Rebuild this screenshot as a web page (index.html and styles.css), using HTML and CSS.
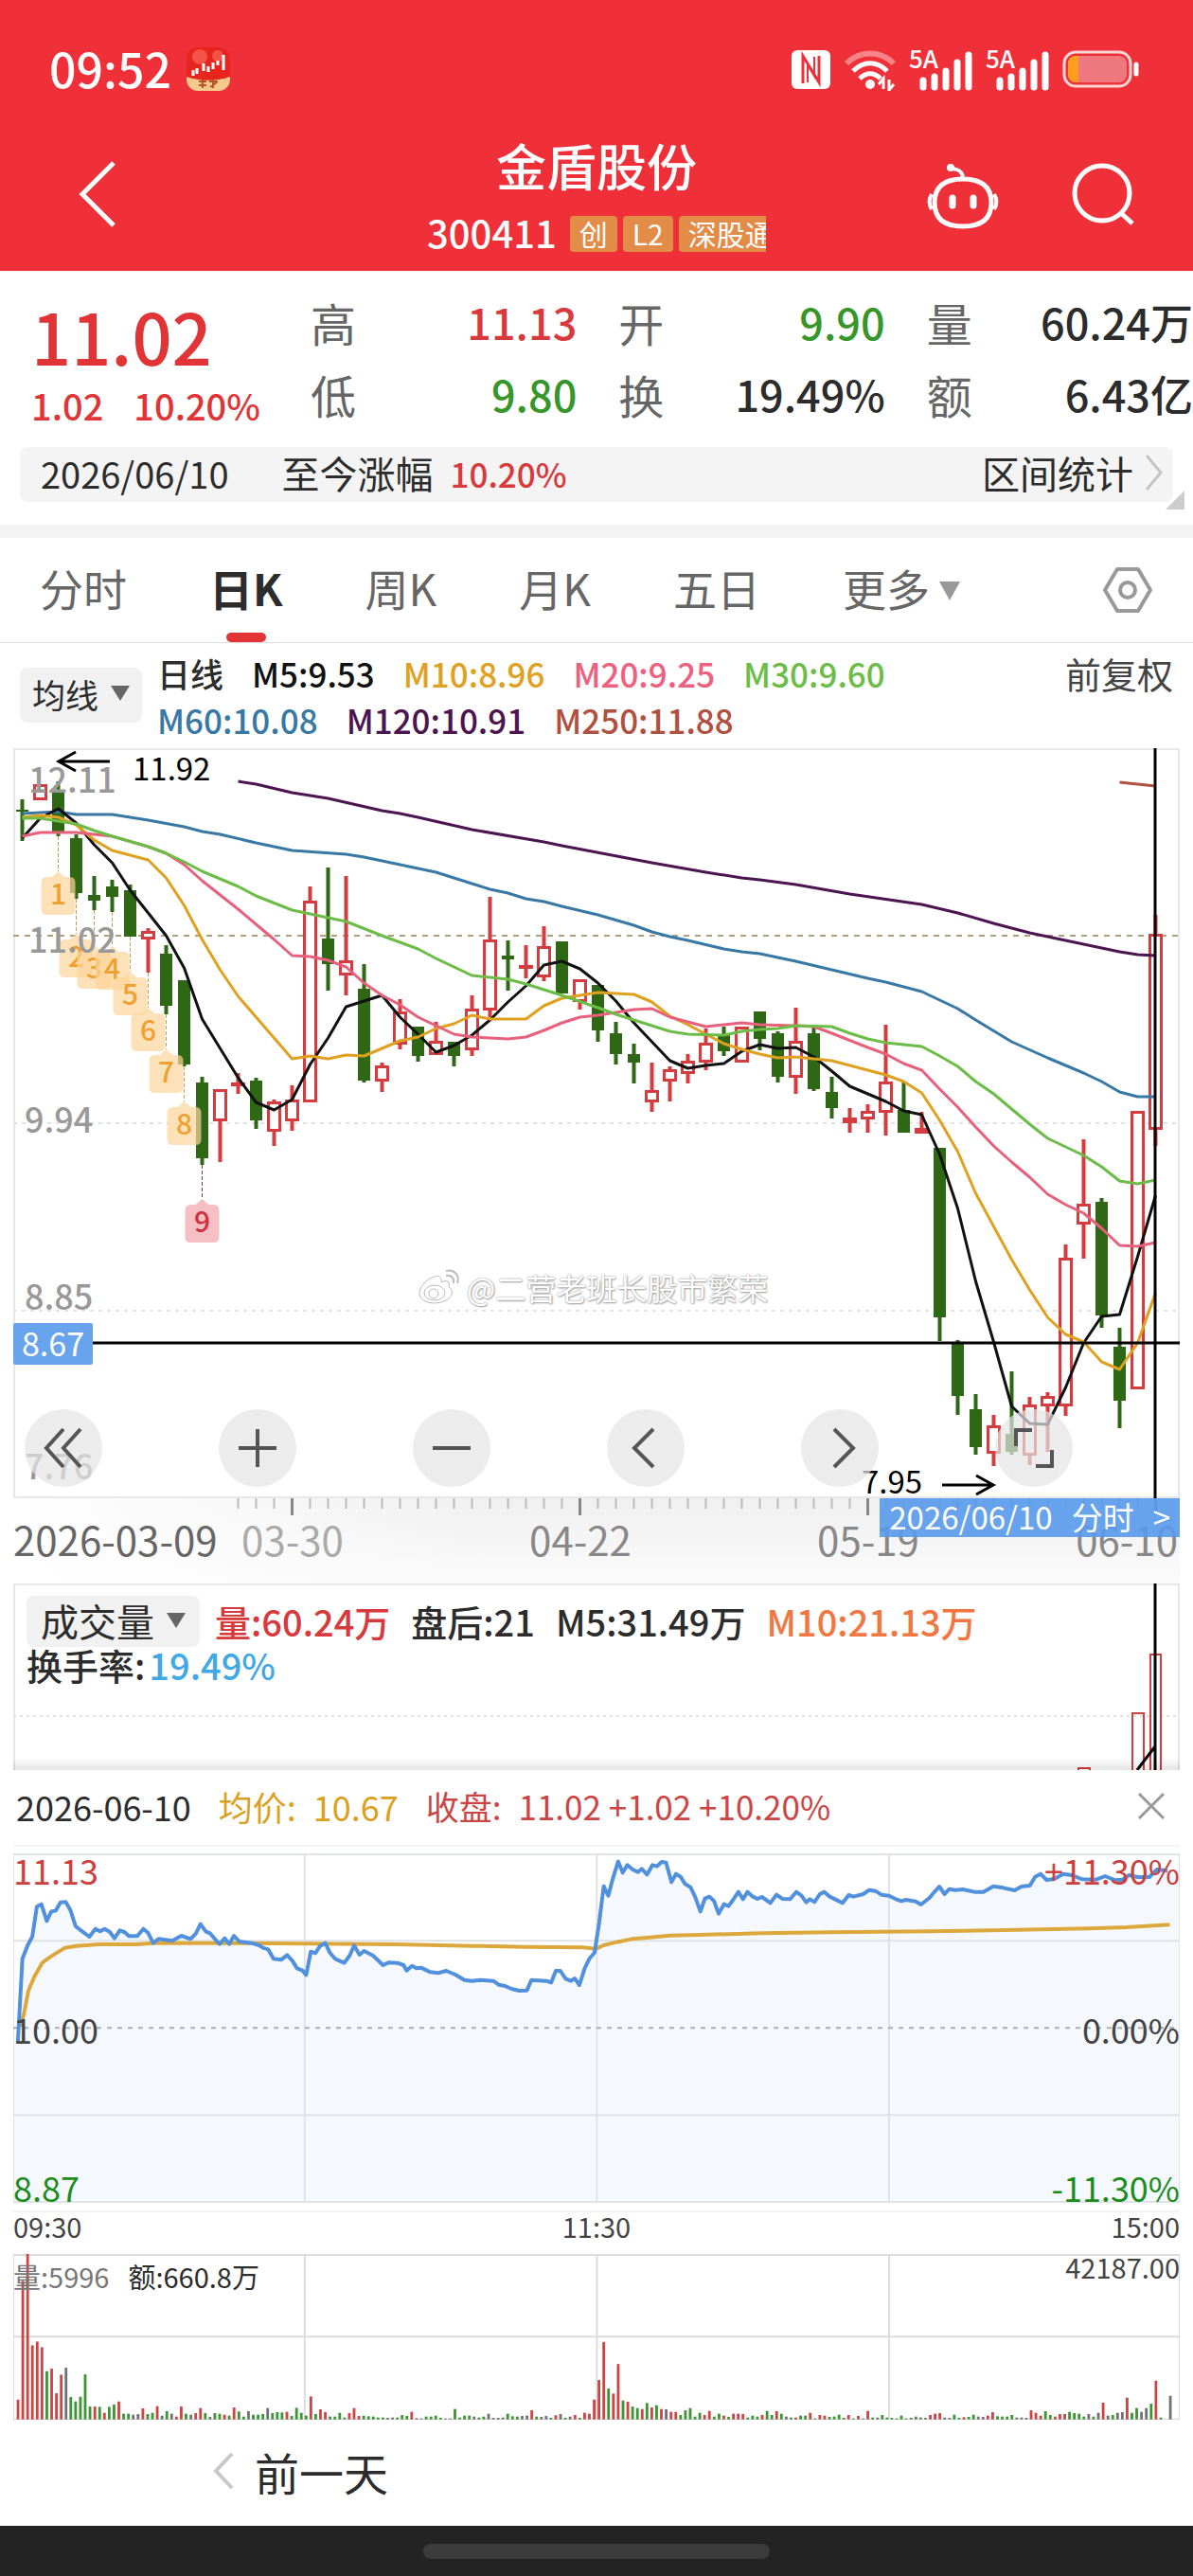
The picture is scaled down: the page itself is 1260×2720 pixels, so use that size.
FILE: index.html
```html
<!DOCTYPE html>
<html lang="zh-CN">
<head>
  <meta charset="utf-8">
  <title>金盾股份 300411</title>
  <meta name="viewport" content="width=device-width, initial-scale=1">
  <link rel="icon" href="data:,">
  <link rel="stylesheet" href="styles.css">
</head>
<body>
  <header class="top">
    <div class="status">
      <span class="time">09:52</span>
      <svg class="app-icon" width="46" height="46" viewBox="0 0 46 46">
        <rect width="46" height="46" rx="12" fill="#e8241f"/>
        <circle cx="14" cy="10" r="8" fill="#f4534a"/>
        <circle cx="33" cy="9" r="6" fill="#f4534a"/>
        <path d="M0 31c14 5 32 5 46 0v3a12 12 0 0 1-12 12H12A12 12 0 0 1 0 34z" fill="#f6c98a"/>
        <path d="M7 24v6M11 22v6M18 17v8M23 20v6M28 16v7M33 14v5M39 8v16" stroke="#fff" stroke-width="3"/>
        <path d="M13 36h8M17 34v9M13 40h8M24 36h9M28 34v9M25 42l7-5" stroke="#b5532a" stroke-width="2"/>
      </svg>
      <span class="grow"></span>
      <svg width="372" height="46" viewBox="0 0 372 46" fill="none">
        <rect x="0" y="3" width="41" height="41" rx="6" fill="#fff"/>
        <path d="M12 38V9l17 28V9" stroke="#ef3038" stroke-width="3"/>
        <path d="M17 37V18l7 12V10" stroke="#ef3038" stroke-width="2"/>
        <path d="M58 17c14-14 36-14 50 0" stroke="#f58488" stroke-width="6"/>
        <path d="M65 25c11-11 25-11 36 0M72 33c7-7 15-7 22 0" stroke="#fff" stroke-width="5"/>
        <circle cx="83" cy="39" r="5" fill="#fff"/>
        <path d="M97 44V33l-5 6M103 34v11l5-6" stroke="#fff" stroke-width="3"/>
        <text class="net" x="124" y="22">5A</text>
        <path d="M139 42V35M151 42V31M163 42V25M175 42V16M187 42V8" stroke="#fff" stroke-width="7" stroke-linecap="round"/>
        <text class="net" x="205" y="22">5A</text>
        <path d="M220 42V35M232 42V31M244 42V25M256 42V16M268 42V8" stroke="#fff" stroke-width="7" stroke-linecap="round"/>
        <rect x="288" y="5" width="70" height="36" rx="12" stroke="#fbd5d6" stroke-width="3"/>
        <rect x="292" y="9" width="62" height="28" rx="8" fill="#ee787d"/>
        <path d="M303 9h-3a8 8 0 0 0-8 8v12a8 8 0 0 0 8 8h3z" fill="#ff9d1c"/>
        <path d="M364 18v10" stroke="#fff" stroke-width="5" stroke-linecap="round"/>
      </svg>
    </div>
    <nav class="nav">
      <button class="icon-btn back" aria-label="返回">
        <svg width="42" height="74" viewBox="0 0 42 74"><path d="M38 4L5 37l33 33" fill="none" stroke="#fff" stroke-width="5"/></svg>
      </button>
      <div class="title">
        <h1>金盾股份</h1>
        <div class="sub"><span class="code">300411</span><span class="tag">创</span><span class="tag">L2</span><span class="tag">深股通</span></div>
      </div>
      <div class="tools">
        <button class="icon-btn" aria-label="助手">
          <svg width="76" height="72" viewBox="0 0 76 72" fill="none" stroke="#fff" stroke-width="5">
            <path d="M38 18c-17 0-30 6-30 25 0 17 10 25 30 25s30-8 30-25c0-19-13-25-30-25z"/>
            <path d="M38 18c0-7-3-10-11-11" stroke-width="4"/>
            <circle cx="25" cy="6" r="3" fill="#fff" stroke-width="2"/>
            <path d="M5 34c-3 5-3 11 0 16M71 34c3 5 3 11 0 16" stroke-width="4"/>
            <path d="M27 38v8M49 38v8" stroke-width="7" stroke-linecap="round"/>
          </svg>
        </button>
        <button class="icon-btn" aria-label="搜索">
          <svg width="68" height="68" viewBox="0 0 68 68" fill="none" stroke="#fff" stroke-width="5"><circle cx="33" cy="33" r="29"/><path d="M53 54l12 11"/></svg>
        </button>
      </div>
    </nav>
  </header>

  <section class="quote">
    <div class="price">
      <div class="last">11.02</div>
      <div class="change"><span>1.02</span><span>10.20%</span></div>
    </div>
    <dl class="stats">
      <div><dt>高</dt><dd class="up">11.13</dd></div>
      <div><dt>开</dt><dd class="down">9.90</dd></div>
      <div><dt>量</dt><dd>60.24万</dd></div>
      <div><dt>低</dt><dd class="down">9.80</dd></div>
      <div><dt>换</dt><dd>19.49%</dd></div>
      <div><dt>额</dt><dd>6.43亿</dd></div>
    </dl>
  </section>
  <div class="range">
    <span>2026/06/10</span>
    <span class="since">至今涨幅</span>
    <span class="up pct">10.20%</span>
    <a class="range-link" href="#">区间统计<svg width="22" height="40" viewBox="0 0 22 40"><path d="M4 2l15 18L4 38" fill="none" stroke="#c4c4c4" stroke-width="3"/></svg></a>
    <i class="corner"></i>
  </div>

  <nav class="tabs">
    <button>分时</button>
    <button class="on">日K</button>
    <button>周K</button>
    <button>月K</button>
    <button>五日</button>
    <button>更多<i class="tri"></i></button>
    <button class="setting" aria-label="设置">
      <svg width="52" height="50" viewBox="0 0 52 50" fill="none" stroke="#999" stroke-width="4"><path d="M15 3h22l13 22-13 22H15L2 25z" stroke-linejoin="round"/><circle cx="26" cy="25" r="8"/></svg>
    </button>
  </nav>

  <div class="legend">
    <button class="chip">均线<i class="tri"></i></button>
    <div class="ma">
      <div><span>日线</span><span class="m5">M5:9.53</span><span class="m10">M10:8.96</span><span class="m20">M20:9.25</span><span class="m30">M30:9.60</span></div>
      <div><span class="m60">M60:10.08</span><span class="m120">M120:10.91</span><span class="m250">M250:11.88</span></div>
    </div>
    <span class="adjust">前复权</span>
  </div>

  <main class="charts">
    <div class="kline">
      <svg id="kline" viewBox="0 0 1232 792">
        <rect x="1" y="1" width="1230" height="790" fill="#fff" stroke="#e8e8e8" stroke-width="2"/>
        <path d="M0 396H1232M0 594H1232" stroke="#e2e2e2" stroke-width="2" stroke-dasharray="4 5"/>
        <path d="M0 198H1232" stroke="#b0a080" stroke-width="2" stroke-dasharray="6 6"/>
        <g id="candles"></g>
        <g id="averages" fill="none" stroke-width="3" stroke-linejoin="round"></g>
        <g id="signals"></g>
        <g class="scale">
          <text x="16" y="47">12.11</text>
          <text x="16" y="216">11.02</text>
          <text x="12" y="406">9.94</text>
          <text x="12" y="593">8.85</text>
          <text x="12" y="772">7.76</text>
        </g>
        <path d="M102 14H48M66 4L48 14l18 10M981 778h54M1017 768l18 10-18 10" fill="none" stroke="#000" stroke-width="3"/>
        <text class="mark" x="126" y="34">11.92</text>
        <text class="mark" x="896" y="787">7.95</text>
        <path d="M0 628H1232M1206 0V792" stroke="#000" stroke-width="3"/>
      </svg>
      <span class="cursor-price">8.67</span>
      <div class="watermark">
        <svg width="46" height="40" viewBox="0 0 46 40" fill="#fff" stroke="#bbb" stroke-width="1">
          <path d="M18 9C8 12 1 21 2 28c2 9 16 11 26 7 9-4 11-11 5-15 2-6-2-8-8-5 1-5-2-8-7-6z"/>
          <ellipse cx="18" cy="26" rx="11" ry="8"/><circle cx="17" cy="27" r="5"/>
          <path d="M30 3c9-2 15 5 12 13M30 8c6-1 9 3 8 8" fill="none" stroke-width="2"/>
        </svg>
        <span>@二营老班长股市繁荣</span>
      </div>
      <div class="controls">
        <button aria-label="最早"><svg width="44" height="44" viewBox="0 0 44 44"><path d="M22 2L4 22l18 20M40 2L22 22l18 20"/></svg></button>
        <button aria-label="放大"><svg width="44" height="44" viewBox="0 0 44 44"><path d="M22 2v40M2 22h40"/></svg></button>
        <button aria-label="缩小"><svg width="44" height="44" viewBox="0 0 44 44"><path d="M2 22h40"/></svg></button>
        <button aria-label="左移"><svg width="44" height="44" viewBox="0 0 44 44"><path d="M30 2L10 22l20 20"/></svg></button>
        <button aria-label="右移"><svg width="44" height="44" viewBox="0 0 44 44"><path d="M16 2l20 20-20 20"/></svg></button>
        <button aria-label="全屏"><svg width="44" height="44" viewBox="0 0 44 44"><path d="M3 20V3h17M41 24v17H24"/></svg></button>
      </div>
      <a class="day-link" href="#"><span>2026/06/10</span><span>分时</span><span>&gt;</span></a>
    </div>

    <div class="dates">
      <svg viewBox="0 0 1232 90">
        <g id="ticks"></g>
        <g class="date">
          <text class="first" x="0" y="61">2026-03-09</text>
          <text class="faded" x="295" y="61" text-anchor="middle">03-30</text>
          <text x="599" y="61" text-anchor="middle">04-22</text>
          <text x="903" y="61" text-anchor="middle">05-19</text>
          <text x="1230" y="61" text-anchor="end">06-10</text>
        </g>
      </svg>
    </div>

    <div class="volume">
      <svg class="volume-bars" viewBox="0 0 1232 197">
        <path d="M1 197V1H1231V197" fill="none" stroke="#e8e8e8" stroke-width="2"/>
        <path d="M0 140H1232" stroke="#e2e2e2" stroke-width="2" stroke-dasharray="3 4"/>
        <path d="M1125 200v-5h12v5M1182 200v-63h12v63M1201 200V75h11v125" fill="none" stroke="#cf3f42" stroke-width="2"/>
        <path d="M1187 197l19-25M1206 0v197" stroke="#000" stroke-width="3"/>
      </svg>
      <div class="volume-info">
        <div>
          <button class="chip">成交量<i class="tri"></i></button>
          <span class="up">量:60.24万</span><span>盘后:21</span><span>M5:31.49万</span><span class="v10">M10:21.13万</span>
        </div>
        <div class="turnover">换手率:<span class="rate">19.49%</span></div>
      </div>
    </div>
  </main>

  <section class="day">
    <div class="day-head">
      <span>2026-06-10</span>
      <span class="avg"><span>均价:</span><span>10.67</span></span>
      <span class="close-price"><span>收盘:</span><span>11.02 +1.02 +10.20%</span></span>
      <button class="icon-btn close" aria-label="关闭"><svg width="30" height="30" viewBox="0 0 30 30"><path d="M2 2l26 26M28 2L2 28" stroke="#999" stroke-width="3"/></svg></button>
    </div>
    <div class="minute">
      <svg viewBox="17 144 1533 1164" preserveAspectRatio="none">
        <path d="M17 146H1550M17 1305H1550" stroke="#f3f3f3"/>
        <path id="minuteFill" fill="#f5f9fe"/>
        <path d="M17 174H1550V1275H17zM17 448H1550M17 1000H1550M400 174V1275M784 174V1275M1168 174V1275" fill="none" stroke="#e0e3e6"/>
        <path d="M17 724H1550" stroke="#aaafb5" stroke-dasharray="5 6"/>
        <path d="M26 720L31 680 37 605 45 560 55 518 65 500 75 485 85 470 100 464 130 459 180 459 200 455 300 455 400 457 520 459 620 464 690 467 765 469 783 473 793 462 810 452 830 442 850 438 880 431 920 429 1000 424 1090 421 1220 418 1320 414 1430 409 1480 405 1537 397" class="avg-line"/>
        <path id="minuteLine" class="price-line"/>
      </svg>
      <div class="labels">
        <div class="up"><span>11.13</span><span>+11.30%</span></div>
        <div><span>10.00</span><span>0.00%</span></div>
        <div class="low"><span>8.87</span><span>-11.30%</span></div>
      </div>
    </div>
    <div class="hours"><span>09:30</span><span>11:30</span><span>15:00</span></div>
    <div class="minute-volume">
      <svg viewBox="17 210 1533 526" preserveAspectRatio="none">
        <path d="M17 213H1550V735H17zM17 472H1550M400 213V735M784 213V735M1168 213V735" fill="none" stroke="#dcdcdc"/>
        <g id="minuteBars"></g>
      </svg>
      <div class="vol-text"><span class="muted">量:5996</span><span>额:660.8万</span><span class="max">42187.00</span></div>
    </div>
    <button class="prev"><svg width="24" height="40" viewBox="0 0 24 40"><path d="M21 2L4 20l17 18" fill="none" stroke="#c8c8c8" stroke-width="4"/></svg>前一天</button>
  </section>
  <footer class="home"><i></i></footer>
  <script src="chart.js"></script>
</body>
</html>
```
FILE: styles.css
```css
* {
  box-sizing: border-box;
}

body {
  margin: 0;
  background: #fff;
  color: #2c2c2c;
  font-family: "Noto Sans CJK SC", "Noto Sans", sans-serif;
  overflow-x: hidden;
}

button {
  border: 0;
  padding: 0;
  background: none;
  color: inherit;
  font: inherit;
  cursor: pointer;
}

a {
  color: inherit;
  text-decoration: none;
}

svg {
  display: block;
}

.up {
  color: #d8393c;
}

.down {
  color: #36962a;
}

.tri {
  display: inline-block;
  border: 10px solid transparent;
  border-top: 16px solid #666;
  border-bottom: 0;
}

/* header */

.top {
  background: #f03038;
  color: #fff;
  height: 286px;
}

.status {
  display: flex;
  align-items: center;
  gap: 16px;
  height: 144px;
  padding: 2px 52px 0;
}

.time {
  padding-bottom: 4px;
  font-size: 50px;
  line-height: 56px;
  font-weight: 500;
}

.grow {
  flex: 1;
}

.net {
  font-size: 26px;
  font-weight: 500;
  fill: #fff;
}

.nav {
  display: grid;
  grid-template-columns: 1fr 358px 1fr;
}

.icon-btn {
  flex: none;
}

.back {
  justify-self: start;
  align-self: start;
  margin: 24px 82px;
}

.title {
  overflow: hidden;
  text-align: center;
}

.title h1 {
  margin: 0 0 24px;
  font-size: 53px;
  line-height: 60px;
  font-weight: 500;
}

.sub {
  display: flex;
  gap: 6px;
  align-items: center;
  height: 38px;
  white-space: nowrap;
}

.code {
  font-size: 40px;
  line-height: 38px;
  padding-bottom: 4px;
  font-weight: 500;
  margin-right: 8px;
}

.tag {
  flex: none;
  padding: 0 10px 2px;
  border-radius: 4px;
  background: #e28c48;
  font-size: 30px;
  line-height: 36px;
}

.tools {
  display: flex;
  justify-content: flex-end;
  align-items: flex-start;
  gap: 76px;
  padding: 27px 61px 0 0;
}

/* quote */

.quote {
  display: flex;
  padding-top: 16px;
  height: 186px;
}

.price {
  width: 328px;
  flex: none;
  padding: 14px 0 0 33px;
  color: #e03437;
}

.last {
  font-size: 74px;
  line-height: 76px;
  font-weight: 500;
}

.change {
  display: flex;
  gap: 32px;
  margin-top: 14px;
  font-size: 38px;
  line-height: 44px;
  font-weight: 500;
}

.stats {
  flex: 1;
  display: grid;
  grid-template-columns: repeat(3, 1fr);
  align-content: start;
  column-gap: 44px;
  margin: 0;
  line-height: 76px;
  white-space: nowrap;
}

.stats div {
  display: flex;
  justify-content: space-between;
}

.stats dt {
  color: #666;
  font-size: 48px;
}

.stats dd {
  margin: 0;
  font-size: 45px;
  font-weight: 500;
}

.range {
  position: relative;
  display: flex;
  align-items: center;
  height: 58px;
  margin: 0 21px 24px;
  padding: 0 10px 4px 22px;
  border-radius: 8px;
  background: #f4f4f4;
  font-size: 38px;
}

.since {
  margin-left: 56px;
  font-size: 40px;
}

.pct {
  margin-left: 18px;
  font-size: 35px;
  font-weight: 500;
}

.range-link {
  display: flex;
  align-items: center;
  gap: 10px;
  margin-left: auto;
  font-size: 40px;
}

.corner {
  position: absolute;
  right: -12px;
  bottom: -8px;
  border-left: 20px solid transparent;
  border-bottom: 20px solid #ccc;
}

/* tabs */

.tabs {
  display: flex;
  align-items: center;
  gap: 87px;
  height: 125px;
  padding: 0 43px 0 42px;
  border-top: 14px solid #f3f3f3;
  border-bottom: 1px solid #ddd;
  color: #666;
  font-size: 46px;
  white-space: nowrap;
}

.tabs button {
  position: relative;
  height: 110px;
  padding-bottom: 6px;
}

.tabs .tri {
  margin-left: 10px;
  border-width: 20px 11px 0;
  border-top-color: #999;
  vertical-align: 6px;
}

.tabs .on {
  color: #2c2c2c;
  font-weight: 700;
}

.tabs .on::after {
  content: "";
  position: absolute;
  left: 50%;
  bottom: 0;
  width: 42px;
  height: 10px;
  margin-left: -21px;
  border-radius: 5px;
  background: #e03437;
}

.tabs .setting {
  margin-left: auto;
  padding-bottom: 0;
}

.legend {
  display: flex;
  align-items: flex-start;
  height: 111px;
  padding: 7px 21px 0;
  font-size: 35px;
  white-space: nowrap;
}

.chip {
  display: inline-flex;
  align-items: center;
  gap: 13px;
  border-radius: 8px;
  background: #f1f1f1;
}

.legend .chip {
  height: 58px;
  margin: 19px 16px 0 0;
  padding: 0 13px 4px;
}

.ma {
  line-height: 49px;
  font-weight: 500;
}

.ma div {
  display: flex;
  gap: 30px;
}

.adjust {
  margin-left: auto;
  font-size: 38px;
  line-height: 49px;
  color: #444;
}

.m5 { color: #111; }
.m10 { color: #e0a020; }
.m20 { color: #ee6080; }
.m30 { color: #6cbc48; }
.m60 { color: #3878a4; }
.m120 { color: #4c1450; }
.m250 { color: #b05040; }

/* daily chart */

.charts {
  padding: 0 14px;
}

.charts svg {
  width: 100%;
}

.kline {
  position: relative;
}

.scale text {
  font-size: 36px;
  font-weight: 500;
  fill: #999;
}

.mark {
  font-size: 33px;
  fill: #000;
}

.signal {
  font-size: 30px;
  font-weight: 500;
  text-anchor: middle;
}

.cursor-price {
  position: absolute;
  left: 0;
  top: 607px;
  padding: 0 9px 3px;
  border-radius: 2px;
  background: #68a4ee;
  color: #fff;
  font-size: 34px;
  line-height: 41px;
}

.watermark {
  position: absolute;
  left: 427px;
  top: 547px;
  display: flex;
  align-items: center;
  gap: 6px;
  color: #fff;
  font-size: 32px;
  line-height: 44px;
  text-shadow: 0 0 2px #888, 1px 1px 2px #aaa;
}

.watermark svg {
  width: 46px;
}

.controls {
  position: absolute;
  left: 12px;
  bottom: 12px;
  display: flex;
  gap: 123px;
}

.controls button {
  width: 82px;
  height: 82px;
  border-radius: 50%;
  background: rgba(228, 228, 228, 0.7);
}

.controls svg {
  width: 44px;
  margin: auto;
  fill: none;
  stroke: #555;
  stroke-width: 4;
}

.day-link {
  position: absolute;
  z-index: 1;
  right: 0;
  top: 100%;
  display: flex;
  gap: 20px;
  padding: 0 10px 2px;
  background: rgba(88, 154, 236, 0.9);
  color: #fff;
  font-size: 33px;
  line-height: 39px;
}

.dates {
  background: linear-gradient(90deg, #fff, rgba(255, 255, 255, 0) 40%), linear-gradient(#f0f0f0, #fbfbfb);
}

.date text {
  font-size: 42px;
  fill: #888;
}

.date .first {
  fill: #666;
}

.date .faded {
  fill: #aaa;
}

.volume {
  position: relative;
  overflow: hidden;
}

.volume::after {
  content: "";
  position: absolute;
  left: 0;
  right: 0;
  bottom: 0;
  height: 14px;
  background: linear-gradient(rgba(0, 0, 0, 0), rgba(0, 0, 0, 0.1));
}

.volume-info {
  position: absolute;
  left: 14px;
  top: 14px;
  font-size: 38px;
  font-weight: 500;
  line-height: 44px;
  white-space: nowrap;
}

.volume-info div {
  display: flex;
  align-items: center;
  gap: 22px;
  height: 54px;
  padding-bottom: 3px;
}

.volume-info .chip {
  height: 54px;
  padding: 0 15px 2px;
  margin-right: -6px;
  font-size: 40px;
  font-weight: 400;
}

.volume-info .turnover {
  gap: 4px;
  height: 38px;
}

.rate {
  color: #40a8e4;
}

.v10 {
  color: #f07840;
}

/* one-day panel */

.day {
  position: relative;
  padding: 0 14px;
  background: #fff;
}

.day-head {
  display: flex;
  align-items: center;
  gap: 29px;
  height: 79px;
  padding: 0 15px 4px 3px;
  font-size: 36px;
  white-space: nowrap;
}

.avg {
  display: flex;
  gap: 18px;
  color: #dca020;
}

.close-price {
  display: flex;
  gap: 18px;
  color: #cc4444;
  font-size: 35px;
}

.close {
  margin-left: auto;
}

.minute,
.minute-volume {
  position: relative;
}

.minute svg {
  width: 100%;
  height: 388px;
}

.minute path {
  vector-effect: non-scaling-stroke;
  stroke-width: 2;
}

.minute .price-line,
.minute .avg-line {
  fill: none;
  stroke: #5090dc;
  stroke-width: 4;
  stroke-linejoin: round;
}

.minute .avg-line {
  stroke: #dca83c;
}

.labels {
  position: absolute;
  left: 0;
  right: 0;
  top: 4px;
  bottom: 5px;
  display: flex;
  flex-direction: column;
  justify-content: space-between;
  font-size: 36px;
  line-height: 44px;
  color: #444;
}

.labels div {
  display: flex;
  justify-content: space-between;
}

.labels .up {
  color: #cc4040;
}

.labels .low {
  color: #1c8c1c;
}

.hours {
  display: flex;
  justify-content: space-between;
  font-size: 29px;
  line-height: 28px;
  padding-bottom: 16px;
  color: #444;
}

.minute-volume svg {
  width: 100%;
  height: 175px;
}

.minute-volume path {
  vector-effect: non-scaling-stroke;
  stroke-width: 2;
}

.vol-text {
  position: absolute;
  left: 0;
  right: 0;
  top: 3px;
  display: flex;
  gap: 20px;
  font-size: 29px;
  line-height: 40px;
}

.muted {
  color: #777;
}

.max {
  margin-left: auto;
  line-height: 20px;
  color: #444;
}

.prev {
  display: flex;
  align-items: center;
  gap: 21px;
  height: 112px;
  padding-bottom: 4px;
  margin-left: 210px;
  font-size: 47px;
}

.home {
  display: flex;
  justify-content: center;
  align-items: center;
  height: 53px;
  background: #232323;
}

.home i {
  width: 29%;
  height: 16px;
  border-radius: 8px;
  background: #3c3c3c;
}
```
FILE: chart.js
```js
const UP = '#d43c3f';
const DOWN = '#2f6814';

// high, body top, body bottom, low for every trading day
const candles = `g 54 65 67 98|r 38 38 55 55|g 35 45 88 93|g 91 95 153 159|g 135 155 161 171|g 139 146 157 173
g 144 150 199 199|r 190 193 202 237|g 208 217 272 281|g 245 245 334 336|g 347 353 433 440|r 360 360 394 437
r 343 353 357 365|g 348 351 393 402|r 371 373 405 420|r 356 371 394 404|r 146 161 374 374|g 126 201 228 256
r 135 224 240 261|g 228 254 351 353|r 332 335 352 363|r 265 278 313 318|g 294 294 325 331|r 289 309 324 324
g 310 310 325 336|r 261 275 319 325|r 157 202 277 284|g 203 219 223 256|r 208 229 233 243|r 188 209 242 246
g 204 204 259 259|r 244 244 268 276|g 250 250 298 310|g 289 301 323 334|g 312 323 332 354|r 332 361 374 384
r 336 339 352 373|r 323 330 344 354|r 296 311 332 340|g 294 302 320 325|r 294 294 332 332|g 278 278 307 319
g 299 301 347 353|r 274 309 348 365|g 295 301 360 362|g 347 363 380 391|r 380 390 396 406|r 376 383 392 406
r 292 352 385 409|g 353 382 406 406|r 384 401 407 407|g 422 422 601 626|g 625 629 684 704|g 682 698 738 746
r 704 715 745 758|g 658 724 743 746|r 685 693 747 757|r 680 684 695 743|r 524 538 695 705|r 413 481 503 539
g 475 479 599 612|g 612 632 689 718|r 383 383 677 677|r 176 196 403 420`.split(/[|\n]/);

// "day:value" pairs, straight between them
const averages = {
  '#4c1450': '12:35 13:38 15:47 17:53 20:66 21:69 22:73 25:86 29:99 30:103 35:121 38:131 40:137 41:139 43:144 46:154 50:165 52:174 54:185 56:195 57:199 58:203 59:207 61:215 62:218 63:219',
  '#b05040': '61:36 63:40',
  '#3878a4': '0:69 2:67 3:70 5:70 7:76 9:83 10:88 11:91 13:100 15:108 18:112 19:115 20:119 21:123 23:131 25:143 26:149 27:153 28:159 29:162 30:167 32:176 34:187 35:194 36:199 37:203 39:212 40:215 41:217 43:225 45:234 47:243 48:247 50:257 52:275 53:287 55:310 57:327 59:343 60:352 61:363 62:368 63:368',
  '#111': '0:95 1:74 2:64 3:79 4:102 5:121 6:150 7:174 8:198 9:232 10:286 11:317 12:348 13:374 14:382 15:371 16:334 17:306 18:273 19:267 20:261 21:284 22:302 23:321 24:314 25:303 26:287 27:268 28:251 29:229 30:225 31:233 32:248 33:267 34:290 35:310 36:330 37:338 38:335 39:333 40:320 41:313 42:317 43:316 44:326 45:341 46:357 47:365 48:373 49:383 50:387 51:429 52:486 53:563 54:627 55:695 56:713 57:714 58:675 59:628 60:600 61:598 62:537 63:472',
  '#e0a020': '0:73 1:71 2:73 3:81 4:97 5:108 7:118 8:137 9:166 10:202 11:234 12:262 13:284 14:306 15:328 16:325 17:328 18:324 19:325 20:317 21:309 22:305 23:296 24:291 25:282 26:286 28:286 29:272 30:264 31:261 32:258 34:260 35:268 36:283 37:292 38:302 39:312 40:318 41:323 42:327 43:326 45:330 46:335 48:345 49:352 50:364 51:393 52:426 53:470 54:505 55:540 56:572 57:601 58:619 59:627 60:648 61:656 62:628 63:575',
  '#e8607c': '0:93 1:89 3:89 5:93 7:104 8:111 9:123 10:140 11:155 12:170 13:186 14:202 15:219 16:220 17:224 18:231 19:248 20:261 21:271 22:284 23:293 24:302 25:305 27:307 28:305 29:298 30:290 31:284 32:282 34:276 35:275 36:284 37:289 38:294 39:292 40:290 41:292 43:293 44:294 45:301 47:316 48:323 49:333 50:340 51:360 52:379 53:400 54:420 55:437 56:453 57:471 58:482 59:491 60:507 61:525 62:526 63:522',
  '#6cbc48': '0:74 1:74 2:77 3:80 4:87 5:93 7:104 8:111 9:120 10:130 12:146 13:156 15:171 17:179 18:183 20:198 22:212 23:222 25:240 26:242 27:244 28:249 30:261 32:274 33:281 34:287 36:299 37:302 39:303 40:299 41:297 42:296 43:293 45:294 46:301 47:307 48:311 50:315 51:325 52:336 53:352 54:365 56:397 57:412 59:430 60:442 61:457 62:460 63:456'
};

const dayX = i => 9.5 + 19 * i;
const put = (id, html) => { document.getElementById(id).innerHTML = html; };

put('candles', candles.map((row, i) => {
  const [kind, ...v] = row.split(' ');
  const [high, top, bottom, low] = v.map(Number);
  const x = dayX(i);
  const color = kind === 'r' ? UP : DOWN;
  const wick = `<path d="M${x} ${high}V${top}M${x} ${bottom}V${low}" stroke="${color}" stroke-width="4"/>`;
  if (kind === 'g') {
    return wick + `<rect x="${x - 6.5}" y="${top}" width="13" height="${bottom - top}" fill="${color}"/>`;
  }
  return wick + `<rect x="${x - 6}" y="${top + 1.5}" width="12" height="${bottom - top - 3}" fill="#fff" stroke="${color}" stroke-width="3"/>`;
}).join(''));

put('averages', Object.entries(averages).map(([color, line]) => {
  const points = line.split(' ').map(p => {
    const [i, y] = p.split(':');
    return dayX(i) + ',' + y;
  });
  return `<polyline points="${points.join(' ')}" stroke="${color}"/>`;
}).join(''));

// nine-turn counter below the falling days
const tips = [130, 196, 208, 209, 236, 274, 318, 373, 476];
put('signals', tips.map((y, n) => {
  const x = dayX(n + 2);
  const low = candles[n + 2].split(' ')[4];
  const last = n === 8;
  return `<path d="M${x} ${low}V${y}" stroke="${last ? '#a03040' : '#c8a050'}" stroke-dasharray="4 2"/>
    <path d="M${x} ${y}l7 6h5q6 0 6 6v28q0 6-6 6h-24q-6 0-6-6v-28q0-6 6-6h5z" fill="${last ? '#f5b4b8' : '#fcd49a'}" fill-opacity="${last ? 0.85 : 0.7}"/>
    <text class="signal" x="${x}" y="${y + 35}" fill="${last ? '#d03040' : '#f0a030'}">${n + 1}</text>`;
}).join(''));

let ticks = '';
for (let i = 12; i < 64; i++) {
  const big = i % 16 === 15;
  ticks += `<path d="M${dayX(i)} 0v${big ? 18 : 11}" stroke="${big ? '#888' : '#bbb'}" stroke-width="${big ? 3 : 2}"/>`;
}
put('ticks', ticks);

const minute = '23,770 29,505 36,462 42,435 48,340 54,332 61,385 67,355 73,352 79,326 86,325 92,350 99,402 106,415 117,435 125,410 131,418 137,410 144,420 150,440 157,415 163,420 169,433 180,433 188,410 194,422 201,455 208,442 226,448 238,432 250,442 257,425 263,395 270,418 276,425 283,445 288,458 295,440 301,458 307,432 314,450 330,455 340,462 345,470 352,475 359,505 369,508 377,493 384,512 390,535 397,542 402,556 408,482 414,487 420,465 427,455 433,485 440,505 452,518 459,495 465,463 472,492 478,480 490,495 503,525 510,517 522,518 530,525 534,542 541,527 547,535 553,533 565,547 575,550 586,543 598,555 610,572 620,575 630,572 648,575 655,587 662,590 672,600 682,606 692,605 698,572 718,575 724,580 730,543 736,543 743,568 750,575 755,567 761,588 768,535 774,505 781,485 787,390 793,275 799,305 805,250 812,197 818,232 824,208 831,222 838,230 843,220 850,238 857,208 863,212 869,198 875,200 882,262 888,236 894,245 900,268 907,278 913,308 920,355 926,314 932,308 938,322 944,362 951,332 957,338 963,318 970,293 976,316 982,293 989,308 995,315 1001,309 1012,328 1020,302 1028,315 1038,316 1046,293 1053,305 1059,326 1064,316 1070,325 1077,300 1083,293 1090,308 1107,328 1115,303 1121,308 1134,300 1142,287 1150,290 1158,302 1168,305 1178,317 1184,322 1190,318 1203,323 1210,333 1221,312 1228,292 1234,276 1241,300 1247,284 1255,287 1265,285 1280,293 1292,293 1305,275 1318,280 1333,288 1342,276 1353,273 1360,245 1367,236 1375,255 1385,252 1397,236 1408,240 1422,253 1440,254 1452,243 1465,256 1475,254 1483,240 1495,246 1510,246 1520,222 1534,226';
document.getElementById('minuteLine').setAttribute('d', 'M' + minute);
document.getElementById('minuteFill').setAttribute('d', 'M' + minute + ' 1550,226 1550,1275 17,1275 17,770z');

// volume per minute, keyed by the minute where each run starts
const runs = {
  0: 'r63 r440 r525 r235 r247 r229 g153 r161 r83 r142 k164 g71 g57 g72 g143 g41 r41 g40 r21 g40 g47 r57 g18 g18 k15 k17 r35 g17 g21 r42 k12 g26 k18 r9 r41 g18 k15 r20 r36 g20 k8 g20 g18 r15 g12 r38 g25 g9 k26 g15 g15 g17 k36 g20 g23 g22 r24 g11 g37 g21 g12 r73 g17 r32 r23 g9 g9 g21 g6 r20 r36 r11 g12 g10 g9 g6 g6',
  77: 'k5 k6 g6 g14 g11 r24 k4 k3 g9 g9 g12 g5 k3 k3 g33 g6 g12 g12 k9 g6 g9 k18 k5 k5 k6 g18 g10 g9 k11 k12 r29 g9 k8 k11 g5 r13 k17 g5 k9 r14 g5 r21 r18',
  120: 'r63 r125 r246 g98 r82 r176 g60 r56 g41 g36 r33 g52 r38 g45 r33 k32 r24 r24 g14 g29 g36 g9 g21 r14 r27 g9 g18 r12 g8 r18 r18 r17 g6 g12 g9 r14 g27 g14 r26 g18 k9 g6 r6 g12 g12 r21 g3 r14 r12 g8 g9 g15 g5 r14 g3 r11 k3 r27 g6 k6 g14 g6 g5 g3 g12 g3 g5 k9 g6 k5 r14 r18 r20 k6 k5 g15 g5 r7 g8 g15 k9 k8 r12 r23 g10 g9 g9 g14 k6 k6 k5 r29 r21 r12 g26 g14 r9 r17 r17 g24 g20 g18 g9 k17 g9 k21',
  226: 'r53 k12 g14 k21 k23 r69 g21 g36 k24 k36 g50 r123 g6 g0 k75'
};
const barColor = { r: '#cc4444', g: '#3c9434', k: '#707078' };
let bars = '';
for (const [start, run] of Object.entries(runs)) {
  run.split(' ').forEach((bar, n) => {
    const height = Number(bar.slice(1));
    const x = 21.5 + (Number(start) + n) * 6.31;
    bars += `<rect x="${x.toFixed(1)}" y="${735 - height}" width="3.5" height="${height}" fill="${barColor[bar[0]]}"/>`;
  });
}
put('minuteBars', bars);
```
